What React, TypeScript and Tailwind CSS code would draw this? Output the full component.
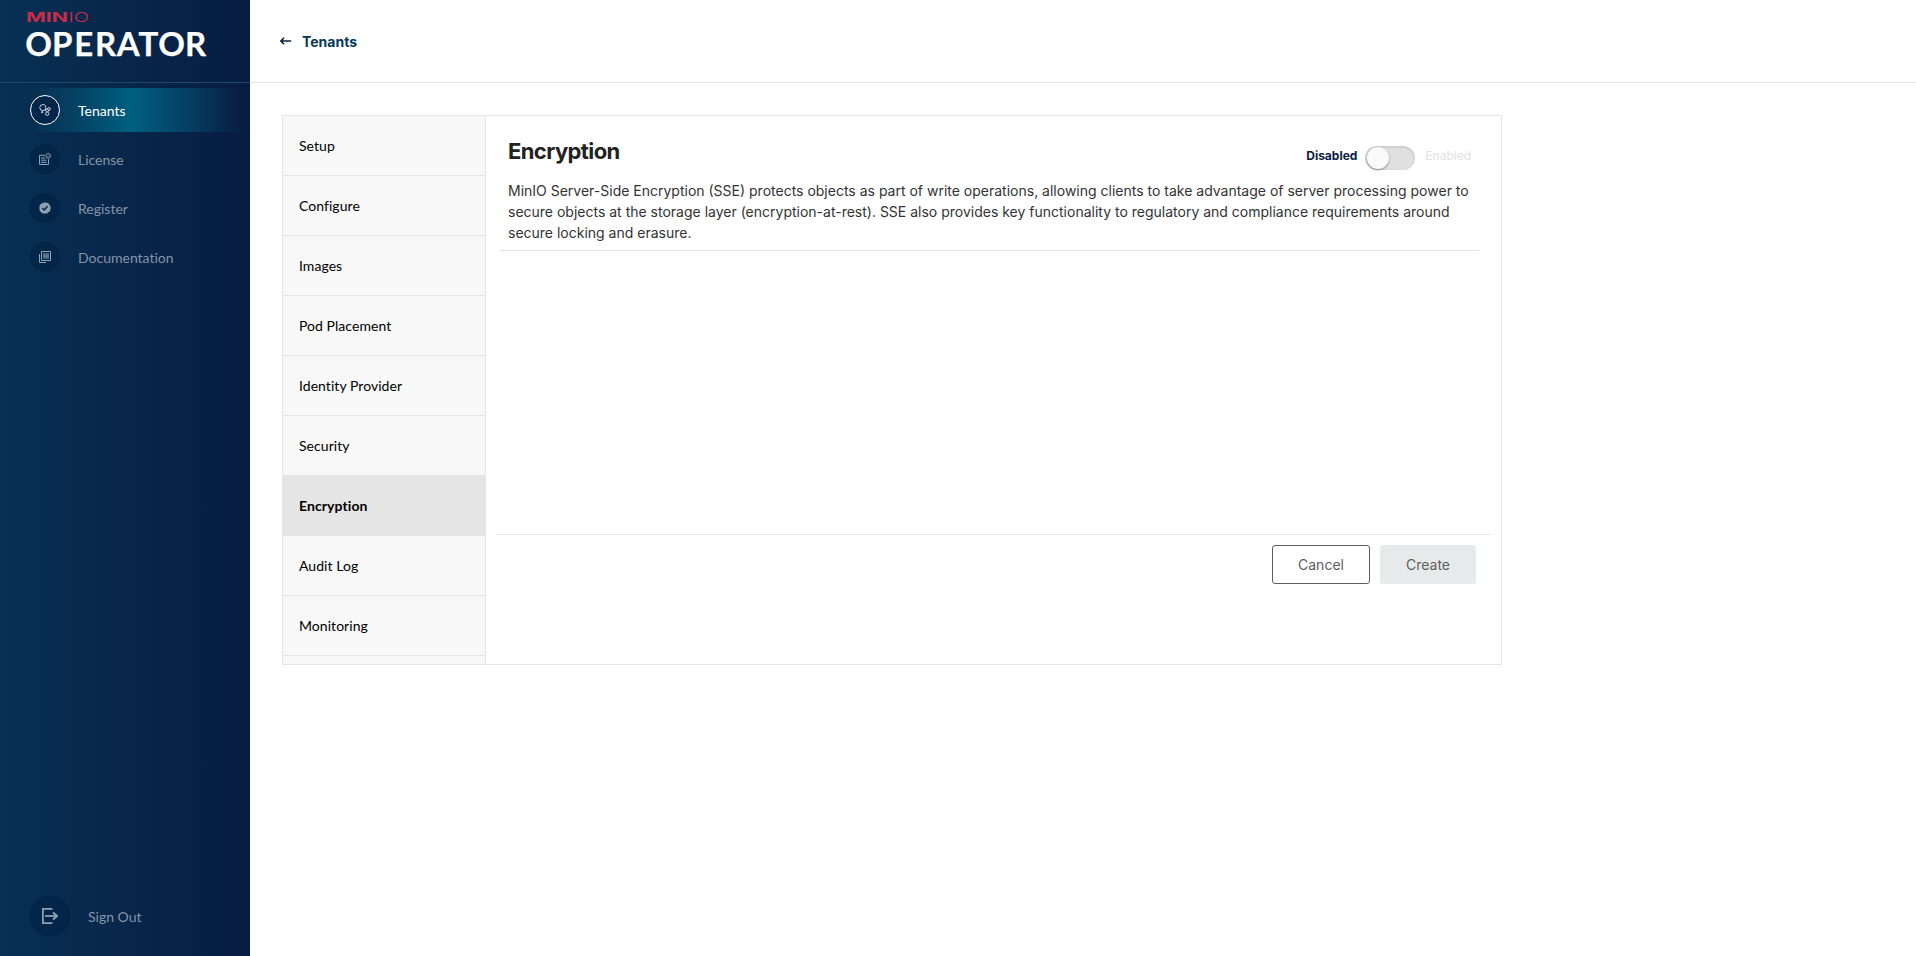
import type { ReactNode } from "react";

const TenantsIcon = () => (
  <svg width="12" height="12" viewBox="0 0 12 12" fill="none" stroke="#fff" strokeOpacity="0.85" strokeWidth="0.9">
    <circle cx="3.9" cy="3.6" r="3.1" />
    <circle cx="10" cy="4.9" r="1.4" />
    <circle cx="8.2" cy="9.7" r="1.7" />
    <circle cx="3.1" cy="8.4" r="0.6" />
    <path d="M6.4 5.4 8.7 5M6.2 5.8l1.5 2.3M3.5 6.6 3.2 8M9.6 6.2 8.8 8.1" />
  </svg>
);

const LicenseIcon = () => (
  <svg width="12" height="12" viewBox="0 0 12 12" fill="none" stroke="#8ea0b3" strokeWidth="1">
    <path d="M6 2.3H.5v9.2h9V6.2" />
    <path d="M2 5h4M2 7.2h5.5M2 9.4h5.5" />
    <circle cx="9.2" cy="2.9" r="2.3" />
    <path d="m8.3 2.9.7.7 1.2-1.3" strokeWidth="0.7" />
  </svg>
);

const RegisterIcon = () => (
  <svg width="12" height="12" viewBox="0 0 12 12">
    <path
      fill="#8ea0b3"
      d="M6 0l1.5.9 1.7-.1.8 1.6 1.4 1L11.3 5 12 6.3l-.9 1.4-.1 1.7-1.6.7-1 1.4-1.7-.2L6 12l-1.4-.7-1.7.1-.8-1.5-1.5-1 .2-1.7L0 6l.8-1.5-.1-1.7 1.6-.7 1-1.4L5 .9z"
    />
    <path d="m3.3 6 1.9 1.9 3.5-3.6" fill="none" stroke="#02264a" strokeWidth="1.4" />
  </svg>
);

const DocumentationIcon = () => (
  <svg width="12" height="12" viewBox="0 0 12 12" fill="none" stroke="#8ea0b3" strokeWidth="1">
    <path d="M2.5.5h9v9h-9z" />
    <path d="M.5 3v8.5H7M4 3h6M4 7h6" />
    <path d="M4 5h6" strokeWidth="1.4" />
  </svg>
);

const SignOutIcon = () => (
  <svg width="16" height="16" viewBox="0 0 16 16" fill="none" stroke="#8ea0b3" strokeWidth="1.8">
    <path d="M10.5.9H.9v14.2h9.6" />
    <path d="M3 8h12" />
    <path d="M11 4.4 15 8l-4 3.6" strokeWidth="2" />
  </svg>
);

type NavItem = { label: string; icon: ReactNode; active?: boolean };

const navItems: NavItem[] = [
  { label: "Tenants", icon: <TenantsIcon />, active: true },
  { label: "License", icon: <LicenseIcon /> },
  { label: "Register", icon: <RegisterIcon /> },
  { label: "Documentation", icon: <DocumentationIcon /> },
];

const steps = [
  "Setup",
  "Configure",
  "Images",
  "Pod Placement",
  "Identity Provider",
  "Security",
  "Encryption",
  "Audit Log",
  "Monitoring",
];

function Logo() {
  return (
    <svg width="210" height="64" viewBox="0 0 210 64" className="block">
      <g fill="#c72c48" fontFamily="Inter, sans-serif" fontSize="13.6">
        <text x="6" y="22" fontWeight="700" textLength="42" lengthAdjust="spacingAndGlyphs">MIN</text>
        <text x="48.5" y="22" fontWeight="300" textLength="20.5" lengthAdjust="spacingAndGlyphs">IO</text>
      </g>
      <text
        x="5.2 32 54.2 75 96.8 118.6 138.2 165"
        y="56"
        fill="#fff"
        stroke="#fff"
        strokeWidth="0.25"
        fontFamily="Lato, sans-serif"
        fontSize="33"
        fontWeight="700"
      >
        OPERATOR
      </text>
    </svg>
  );
}

function Sidebar() {
  return (
    <aside className="flex w-[250px] shrink-0 flex-col bg-linear-to-r from-[#073052] to-[#081c42] font-[Lato,sans-serif] text-[14px] [font-variant-ligatures:none]">
      <div className="h-[83px] border-b border-[#1c4a6b] pl-5">
        <Logo />
      </div>
      <nav className="mt-[5px] flex flex-col gap-[5px]">
        {navItems.map((item) => (
          <a
            key={item.label}
            className={
              item.active
                ? "mr-[10px] ml-[30px] flex h-11 items-center gap-[18px] bg-[linear-gradient(90deg,transparent_0%,#005f80_48%,transparent_100%)] text-white"
                : "mr-[10px] ml-[30px] flex h-11 items-center gap-[18px] text-[#8395a9]"
            }
          >
            <span
              className={
                item.active
                  ? "flex size-[30px] items-center justify-center rounded-full border border-white bg-[#02264a]"
                  : "flex size-[30px] items-center justify-center rounded-full border border-[#04223f] bg-[#02264a]"
              }
            >
              {item.icon}
            </span>
            <span className="pt-px">{item.label}</span>
          </a>
        ))}
      </nav>
      <a className="mt-auto mb-5 ml-[30px] flex items-center gap-[18px] text-[#8395a9]">
        <span className="flex size-10 items-center justify-center rounded-full border-2 border-[#032247] bg-[#02264a]">
          <SignOutIcon />
        </span>
        <span className="pt-px">Sign Out</span>
      </a>
    </aside>
  );
}

function Stepper() {
  return (
    <div className="flex w-[203px] shrink-0 flex-col overflow-hidden border-r border-[#e5e5e5] bg-[#f8f8f8] font-[Lato,sans-serif] text-[14px] text-black [font-variant-ligatures:none]">
      {steps.map((step) => (
        <div
          key={step}
          className={
            step === "Encryption"
              ? "-mt-px flex h-[61px] shrink-0 items-center border-b border-[#e5e5e5] bg-[#e5e5e5] pl-4 font-bold tracking-[0.08px]"
              : "flex h-[60px] shrink-0 items-center border-b border-[#e5e5e5] pb-px pl-4 tracking-[0.05px]"
          }
        >
          {step}
        </div>
      ))}
    </div>
  );
}

export default function App() {
  return (
    <div className="flex h-[956px] w-[1916px] bg-white font-[Inter,sans-serif]">
      <Sidebar />
      <main className="flex grow flex-col">
        <header className="flex h-[83px] items-center border-b border-[#e5e5e5] pl-[30px] text-[14px] font-bold text-[#07375a]">
          <svg width="12" height="8" viewBox="0 0 12 8" fill="none" stroke="#081c42" strokeWidth="1.6">
            <path d="M.8 4H11.2M4 .8.9 4 4 7.2" />
          </svg>
          <span className="pl-[10px]">Tenants</span>
        </header>
        <section className="mt-8 ml-8 flex h-[550px] w-[1220px] border border-[#e5e5e5]">
          <Stepper />
          <div className="flex grow flex-col pr-[10px] pl-[10px]">
            <div className="mr-3 ml-1 flex h-[135px] flex-col border-b border-[#e0e0e0] px-2 pt-[18px]">
              <div className="flex h-[46px] items-start justify-between">
                <h1 className="pt-[2px] text-[22px] leading-[30px] font-bold tracking-[-0.6px] text-[#222]">Encryption</h1>
                <div className="flex items-center pt-3 text-[12px]">
                  <span className="pb-1 font-bold text-[#081c42]">Disabled</span>
                  <span className="mr-[10px] ml-2 flex h-6 w-[50px] items-center rounded-full bg-[#e0e0e0] pl-[2px] shadow-[inset_0_1px_3px_rgba(0,0,0,0.15)]">
                    <span className="size-[22px] rounded-full bg-[#fafafa] shadow-[0_1px_2px_rgba(0,0,0,0.4)]" />
                  </span>
                  <span className="pb-1 text-[#e2e2e2]">Enabled</span>
                </div>
              </div>
              <p className="text-[14px] leading-[21px] whitespace-nowrap text-[#333]">
                MinIO Server-Side Encryption (SSE) protects objects as part of write operations, allowing clients to take advantage of server processing power to
                <br />
                secure objects at the storage layer (encryption-at-rest). SSE also provides key functionality to regulatory and compliance requirements around
                <br />
                secure locking and erasure.
              </p>
            </div>
            <div className="mt-[283px] flex justify-end gap-[10px] border-t border-[#eaeaea] pt-[10px] pr-[15px] text-[14px] text-[#5e5e5e]">
              <button className="h-[39px] w-[98px] rounded-[3px] border border-[#5e5e5e] bg-white">Cancel</button>
              <button className="h-[39px] w-24 rounded-[3px] bg-[#e6eaeb]">Create</button>
            </div>
          </div>
        </section>
      </main>
    </div>
  );
}
